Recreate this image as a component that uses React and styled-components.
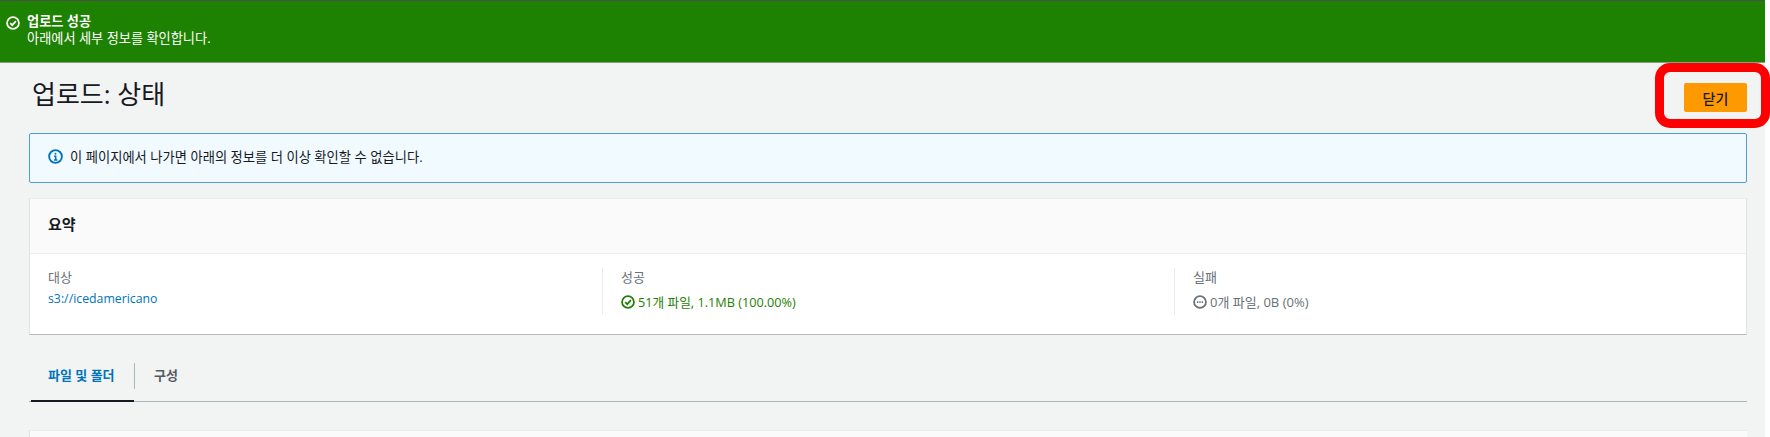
import React from "react";
import styled, {createGlobalStyle} from "styled-components";

const fontStack = `"Open Sans", "Noto Sans CJK KR", sans-serif`;

const GlobalStyle = createGlobalStyle`
  html, body {
    margin: 0;
    padding: 0;
    background: #fff;
    overflow: hidden;
  }
  * {
    box-sizing: border-box;
  }
`;

const Page = styled.div`
  position: relative;
  width: 1765px;
  height: 437px;
  background: #f2f3f3;
  font-family: ${fontStack};
  font-size: 13px;
  color: #16191f;
`;

const Flash = styled.div`
  height: 63px;
  display: flex;
  align-items: flex-start;
  gap: 7px;
  padding: 12px 6px 0;
  background: #1d8102;
  border-top: 1px solid #4a4f4a;
  border-bottom: 1px solid #8a9a86;
  color: #fff;
  font-size: 13.2px;
  line-height: 17px;
`;

const FlashIcon = styled.span`
  display: flex;
  margin-top: 3px;
`;

const FlashTitle = styled.div`
  font-weight: 700;
`;

const Main = styled.div`
  display: flex;
  flex-direction: column;
  padding: 0 18px 0 29px;
`;

const HeaderRow = styled.div`
  height: 70px;
  display: flex;
  justify-content: space-between;
  align-items: flex-start;
`;

const Title = styled.h1`
  margin: 12px 0 0 3px;
  font-size: 26px;
  font-weight: 400;
  line-height: 38px;
`;

const CloseButton = styled.button`
  width: 63px;
  height: 29px;
  margin-top: 20px;
  padding: 0;
  border: 0;
  border-radius: 2px;
  background: #ff9900;
  color: #16191f;
  font-family: inherit;
  font-size: 14px;
  font-weight: 500;
`;

const Highlight = styled.div`
  position: absolute;
  top: 63px;
  left: 1655px;
  width: 115px;
  height: 65px;
  border: 9px solid #ff0000;
  border-radius: 15px;
  pointer-events: none;
`;

const InfoBox = styled.div`
  height: 50px;
  display: flex;
  align-items: center;
  gap: 7px;
  padding: 0 18px 3px;
  background: #f1faff;
  border: 1px solid #4d9fd3;
  border-radius: 2px;
  font-size: 13.3px;
`;

const Card = styled.section`
  margin-top: 15px;
  height: 137px;
  background: #fff;
  border-left: 1px solid #e0e2e2;
  border-right: 1px solid #e0e2e2;
  border-top: 1px solid #eaeded;
  border-bottom: 1px solid #b4b9b9;
`;

const CardHeader = styled.div`
  height: 55px;
  display: flex;
  align-items: center;
  padding: 0 18px 6px;
  background: #fafafa;
  border-bottom: 1px solid #eaeded;
  font-size: 15px;
  font-weight: 700;
`;

const Columns = styled.div`
  display: grid;
  grid-template-columns: repeat(3, 1fr);
  padding-top: 14px;
`;

const Column = styled.div`
  height: 47px;
  padding-left: 18px;
  border-left: ${({$first}) => ($first ? "0" : "1px solid #eaeded")};
`;

const Label = styled.div`
  color: #687078;
  line-height: 18px;
`;

const Value = styled.div`
  display: flex;
  align-items: center;
  gap: 3px;
  margin-top: ${({$status}) => ($status ? "7px" : "4px")};
  font-size: ${({$size}) => $size || "13px"};
  line-height: 18px;
  color: ${({$tone}) => $tone || "#16191f"};
`;

const TargetLink = styled.a`
  color: #0073bb;
  font-size: 12.3px;
  text-decoration: none;
`;

const Tabs = styled.div`
  display: flex;
  height: 67px;
  align-items: flex-end;
  border-bottom: 1px solid #aab7b8;
`;

const Tab = styled.div`
  height: 38px;
  display: flex;
  align-items: flex-start;
  padding: 3px 19px 0;
  font-size: 13px;
  font-weight: 700;
  line-height: 18px;
  color: ${({$active}) => ($active ? "#0073bb" : "#545b64")};
  ${({$active}) => $active && `
    width: 103px;
    margin-left: 2px;
    padding-left: 17px;
    box-shadow: 0 1px 0 #16191f, inset 0 -1px 0 #16191f;
  `}
`;

const TabSeparator = styled.div`
  width: 1px;
  height: 26px;
  margin-bottom: 12px;
  background: #aab7b8;
`;

const LowerCard = styled.div`
  margin-top: 28px;
  height: 20px;
  background: #fafafa;
  border-left: 1px solid #e0e2e2;
  border-top: 1px solid #eaeded;
`;

const StatusIcon = ({size = 14, color = "currentColor", children}) => (
  <svg width={size} height={size} viewBox="0 0 16 16" fill="none" stroke={color} strokeWidth="2" style={{flexShrink: 0}}>
    <circle cx="8" cy="8" r="6.8" />
    {children}
  </svg>
);

const App = () => (
  <>
    <GlobalStyle />
    <Page>
      <Flash>
        <FlashIcon>
          <StatusIcon color="#fff">
            <path d="M4.8 8.2 7.2 10.5 11.3 5.8" />
          </StatusIcon>
        </FlashIcon>
        <div>
          <FlashTitle>업로드 성공</FlashTitle>
          <div>아래에서 세부 정보를 확인합니다.</div>
        </div>
      </Flash>
      <Main>
        <HeaderRow>
          <Title>업로드: 상태</Title>
          <CloseButton>닫기</CloseButton>
        </HeaderRow>
        <InfoBox>
          <StatusIcon size={15} color="#0073bb">
            <circle cx="8" cy="5" r="1" fill="#0073bb" stroke="none" />
            <path d="M6.4 7.6H8.2V11.6M6.4 11.6H10" strokeWidth="1.6" />
          </StatusIcon>
          이 페이지에서 나가면 아래의 정보를 더 이상 확인할 수 없습니다.
        </InfoBox>
        <Card>
          <CardHeader>요약</CardHeader>
          <Columns>
            <Column $first>
              <Label>대상</Label>
              <Value>
                <TargetLink href="#">s3://icedamericano</TargetLink>
              </Value>
            </Column>
            <Column>
              <Label>성공</Label>
              <Value $status $size="12.7px" $tone="#1d8102">
                <StatusIcon>
                  <path d="M4.8 8.2 7.2 10.5 11.3 5.8" />
                </StatusIcon>
                51개 파일, 1.1MB (100.00%)
              </Value>
            </Column>
            <Column>
              <Label>실패</Label>
              <Value $status $tone="#687078">
                <StatusIcon>
                  <path d="M4.5 8H11.5" strokeDasharray="1.6 1.1" />
                </StatusIcon>
                0개 파일, 0B (0%)
              </Value>
            </Column>
          </Columns>
        </Card>
        <Tabs>
          <Tab $active>파일 및 폴더</Tab>
          <TabSeparator />
          <Tab>구성</Tab>
        </Tabs>
        <LowerCard />
      </Main>
      <Highlight />
    </Page>
  </>
);

export default App;
